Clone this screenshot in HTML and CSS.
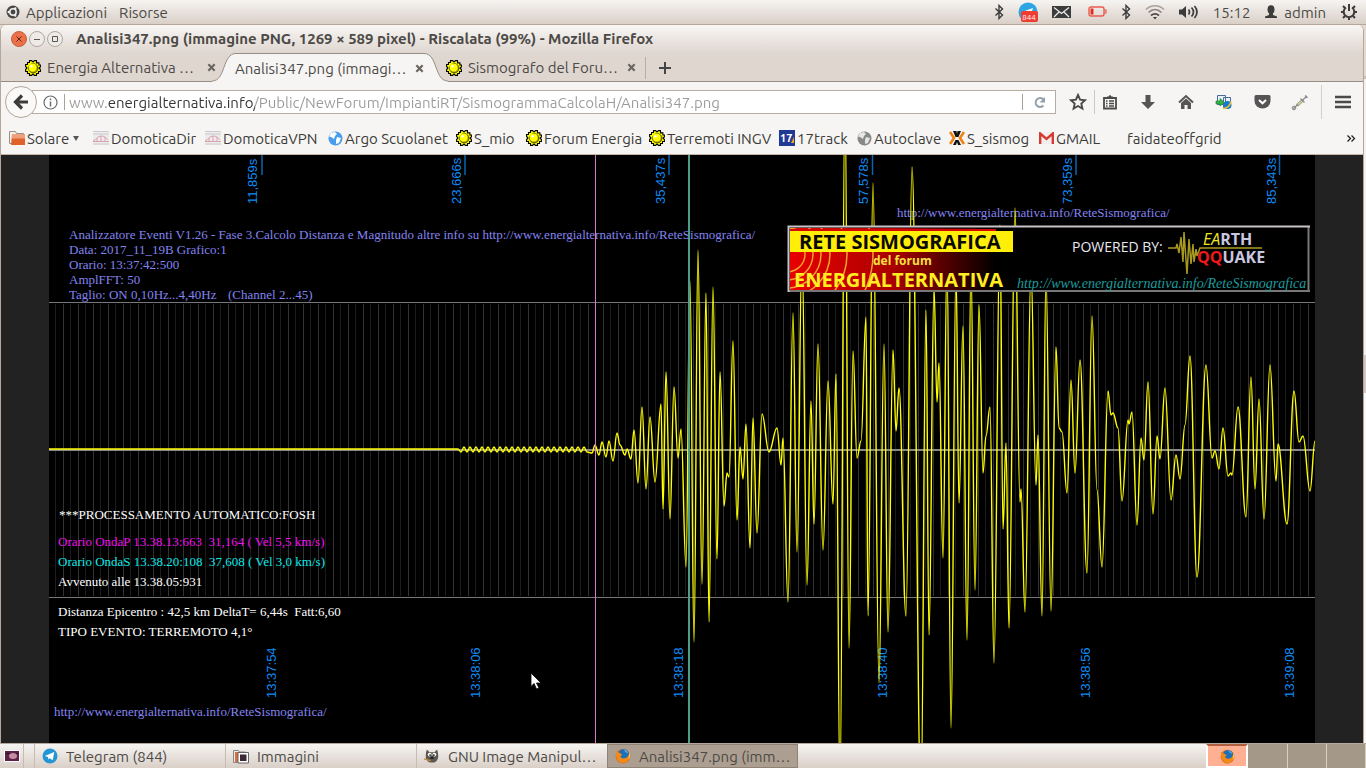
FILE: index.html
```html
<!DOCTYPE html>
<html lang="it">
<head>
    <meta charset="UTF-8">
    <meta name="viewport" content="width=device-width, initial-scale=1.0">
    <title>Analisi347.png</title>
    <link rel="stylesheet" href="styles.css">
</head>
<body>
    <!-- shared icons -->
    <svg class="defs" width="0" height="0" aria-hidden="true">
        <symbol id="sun" viewBox="0 0 16 16">
            <path d="M4.500 .6h2L8 2l1.500-1.400h2v2.300h2.400V5h1.500v2L14 8l1.400 1.500v2h-1.900v2h-2v1.900h-2L8 14l-1.500 1.400h-2v-1.900h-2v-2H.6v-2L2 8 .6 6.500v-2h1.900v-2h2z" fill="#ff0" stroke="#000" stroke-width="1.100"/>
            <circle cx="8.200" cy="8.200" r="4.700" fill="#b8a800" stroke="#000" stroke-width=".6"/>
            <circle cx="7.600" cy="7.500" r="3.900" fill="#ff0"/>
            <circle cx="6.500" cy="6.300" r="1.200" fill="#fff"/>
        </symbol>
        <symbol id="bluetooth" viewBox="0 0 10 16">
            <path d="M1.500 4.500l7 6.500L5 14.500V1.500L8.500 5l-7 6.500" fill="none" stroke="#3c3c3c" stroke-width="1.400"/>
        </symbol>
        <symbol id="firefox" viewBox="0 0 16 16">
            <circle cx="8" cy="8.200" r="7.300" fill="#e66000"/>
            <circle cx="8.500" cy="6.600" r="5.500" fill="#1c6fb8"/>
            <path d="M8 1.500c3 0 5 2 5 4-1-1-3-1-3-2.500z" fill="#5bb4e8"/>
            <path d="M1.500 3c1 1.500 2 1 3.500 2 0 1 2 1 2.500 1.500-.5 1-2 1-2 2 1 2 3 2 4.500 1.500 2 0 3-1 3.500-3.500 1.500 3 .5 6-2 7.500-3 1.800-8 1-9.500-3C.5 8.500.8 5 1.500 3z" fill="#f08a1c"/>
            <path d="M14 4c1.500 3 1.300 6-.5 8 .5-3 .5-5 .5-8z" fill="#ffd24a"/>
        </symbol>
        <symbol id="chart" viewBox="0 0 16 16">
            <rect y="1" width="16" height="14" fill="#ececee"/>
            <path d="M0 1.500h16M0 4h16M0 14h16" stroke="#c4c4c8" stroke-width=".8"/>
            <path d="M0 11c3-1 4-5 8-5 3 0 5 1 7 4M0 11.500h16M4 8v3M8 6v5M12 7v4" fill="none" stroke="#dc98a4" stroke-width=".9"/>
        </symbol>
        <symbol id="close" viewBox="0 0 10 10">
            <path d="M1.500 1.500l7 7M8.500 1.500l-7 7" stroke="#6a6560" stroke-width="2.400"/>
        </symbol>
    </svg>

    <header class="panel">
        <svg class="logo" width="14" height="14" viewBox="0 0 14 14"><circle cx="7" cy="7" r="6.500" fill="#4a4844"/><circle cx="7" cy="7" r="3.200" fill="none" stroke="#eee" stroke-width="1.500"/><circle cx="2.800" cy="7" r="1.200" fill="#eee"/><circle cx="9.200" cy="3.400" r="1.200" fill="#eee"/><circle cx="9.200" cy="10.600" r="1.200" fill="#eee"/></svg>
        <button class="menu">Applicazioni</button>
        <button class="menu">Risorse</button>
        <div class="tray">
            <svg width="10" height="16"><use href="#bluetooth"/></svg>
            <svg width="20" height="20" viewBox="0 0 20 20"><circle cx="10" cy="10" r="9.500" fill="#2ca5e0"/><path d="M4 10l11-4-2 6z" fill="#fff"/><rect x="3" y="9" width="17" height="11" rx="2" fill="#f03c32"/><text x="11" y="18" class="badge">844</text></svg>
            <svg width="19" height="14" viewBox="0 0 19 14"><path d="M0 1h19v12H0z" fill="#3c3c3c"/><path d="M2 2.500l7.500 6 7.500-6M2 12l5-5M17 12l-5-5" fill="none" stroke="#eee" stroke-width="1.200"/></svg>
            <svg class="battery" width="19" height="12" viewBox="0 0 19 12"><rect x="1" y="1" width="15" height="9" rx="2" fill="none" stroke="#ec5a50" stroke-width="1.400"/><path d="M16 4h2v3h-2" fill="none" stroke="#ec5a50" stroke-width="1.200"/><path d="M2.500 2.500h3v6h-3z" fill="#e03024"/></svg>
            <svg width="10" height="16"><use href="#bluetooth"/></svg>
            <svg width="20" height="16" viewBox="0 0 20 16" fill="none" stroke-width="1.700"><path d="M1 5.500c5-5 13-5 18 0" stroke="#aaa39c"/><path d="M3.500 8.500c4-4 9-4 13 0" stroke="#8b857f"/><path d="M6 11.500c3-2.500 5-2.500 8 0" stroke="#4a4844"/><path d="M8 13h4l-2 2.500z" fill="#3c3c3c"/></svg>
            <svg width="20" height="16" viewBox="0 0 20 16"><path d="M0 5.500h3L7 2v12l-4-3.500H0z" fill="#3c3c3c"/><path d="M9.500 5.500q2 2.500 0 5M12.500 3.500q4 4.500 0 9M15.500 2q5 6 0 12" fill="none" stroke="#3c3c3c" stroke-width="1.700"/></svg>
            <span>15:12</span>
            <button class="menu user"><svg width="14" height="14" viewBox="0 0 14 14"><ellipse cx="7" cy="4.500" rx="3.500" ry="4.300" fill="#3c3c3c"/><path d="M5 7h4v3l4 1.500V13H1v-1.500L5 10z" fill="#3c3c3c"/></svg>admin</button>
            <svg width="18" height="18" viewBox="0 0 18 18" fill="none" stroke="#3c3c3c"><path d="M6 4.500a5.300 5.300 0 1 0 6 0" stroke-width="2"/><path d="M9 1v7" stroke-width="2"/><path d="M3 3l2 2M15 3l-2 2M1 9h3M17 9h-3M3 15l2-2M15 15l-2-2M9 14v3" stroke-width="2"/></svg>
        </div>
    </header>

    <main class="window">
        <div class="titlebar">
            <button class="wbtn wclose" aria-label="Chiudi"><svg width="8" height="8"><path d="M1.500 1.500l5 5M6.500 1.500l-5 5" stroke="#5c2a18"/></svg></button>
            <button class="wbtn" aria-label="Minimizza"><svg width="8" height="8"><path d="M1 4.500h6" stroke="#555"/></svg></button>
            <button class="wbtn" aria-label="Massimizza"><svg width="8" height="8"><path d="M1.500 1.500h5v5h-5z" fill="none" stroke="#555"/></svg></button>
            <h1>Analisi347.png (immagine PNG, 1269 × 589 pixel) - Riscalata (99%) - Mozilla Firefox</h1>
        </div>

        <div class="tabs">
            <div class="tab">
                <svg width="16" height="16"><use href="#sun"/></svg>
                <span class="label">Energia Alternativa …</span>
                <button class="tclose" aria-label="Chiudi scheda"><svg width="9" height="9"><use href="#close"/></svg></button>
            </div>
            <div class="tab active">
                <svg class="curve" width="24" height="29" viewBox="0 0 24 29"><path d="M0 29V28C14 28 10 .5 24 .5V29z" fill="#f6f5f3"/><path d="M0 28C14 28 10 .5 24 .5" fill="none" stroke="#958c84"/></svg>
                <div class="inner">
                    <span class="label">Analisi347.png (immagi…</span>
                    <button class="tclose" aria-label="Chiudi scheda"><svg width="9" height="9"><use href="#close"/></svg></button>
                </div>
                <svg class="curve" width="24" height="29" viewBox="0 0 24 29"><path d="M24 29V28C10 28 14 .5 0 .5V29z" fill="#f6f5f3"/><path d="M24 28C10 28 14 .5 0 .5" fill="none" stroke="#958c84"/></svg>
            </div>
            <div class="tab last">
                <svg width="16" height="16"><use href="#sun"/></svg>
                <span class="label">Sismografo del Foru…</span>
                <button class="tclose" aria-label="Chiudi scheda"><svg width="9" height="9"><use href="#close"/></svg></button>
            </div>
            <button class="newtab" aria-label="Nuova scheda"><svg width="12" height="12"><path d="M6 0v12M0 6h12" stroke="#444" stroke-width="2"/></svg></button>
        </div>

        <nav class="navbar">
            <button class="back" aria-label="Indietro"><svg width="16" height="16" viewBox="0 0 16 16"><path d="M9 1.500L2.500 8 9 14.500M3 8h12" fill="none" stroke="#3c3c3c" stroke-width="3.200"/></svg></button>
            <div class="urlbar">
                <svg width="15" height="15" viewBox="0 0 15 15"><circle cx="7.500" cy="7.500" r="6.500" fill="none" stroke="#6c6c6c" stroke-width="1.200"/><path d="M7.500 3.500v1.800M7.500 6.500v5" stroke="#6c6c6c" stroke-width="1.500"/></svg>
                <i class="line"></i>
                <input class="url" type="text" aria-label="Indirizzo" value="www.energialternativa.info/Public/NewForum/ImpiantiRT/SismogrammaCalcolaH/Analisi347.png">
                <i class="line"></i>
                <button class="reload" aria-label="Ricarica"><svg width="13" height="13" viewBox="0 0 13 13"><path d="M10.500 9.500a4.500 4.500 0 1 1 0-6" fill="none" stroke="#93a0ac" stroke-width="1.900"/><path d="M12 1v5.500H6.500z" fill="#93a0ac"/></svg></button>
            </div>
            <div class="tools">
                <button aria-label="Preferiti"><svg width="18" height="18" viewBox="0 0 18 18"><path d="M9 2l2.100 4.700 5 .5-3.800 3.400 1.100 5L9 13l-4.400 2.600 1.100-5L1.900 7.200l5-.5z" fill="none" stroke="#4a4a4a" stroke-width="1.900"/></svg></button>
                <button aria-label="Segnalibri"><svg width="16" height="16" viewBox="0 0 16 16"><path d="M2 4h12v10.500H2z" fill="none" stroke="#4a4a4a" stroke-width="1.800"/><path d="M5 2.500h1.500L8 .8l1.500 1.700H11V5H5z" fill="#4a4a4a"/><path d="M4 7h1.500M7 7h5M4 9.500h1.500M7 9.500h5M4 12h1.500M7 12h5" stroke="#4a4a4a" stroke-width="1.300"/></svg></button>
                <button aria-label="Download"><svg width="16" height="16" viewBox="0 0 16 16"><path d="M5.500 1h5v7H15l-7 7-7-7h4.500z" fill="#555"/></svg></button>
                <button aria-label="Pagina iniziale"><svg width="16" height="16" viewBox="0 0 16 16"><path d="M1 8.500l7-6.500 7 6.500" fill="none" stroke="#555" stroke-width="2"/><path d="M3 9l5-4.500L13 9v6H9.500v-4h-3v4H3z" fill="#555"/></svg></button>
                <button aria-label="Traduci"><svg width="18" height="16" viewBox="0 0 18 16"><path d="M2.500 1.500h8v9h-8zM8.500 3.500h7v10h-7z" fill="#e8f0fb" stroke="#4a6c98"/><circle cx="12.500" cy="11" r="4" fill="#1678d0"/><path d="M8 14.500c4 0 7-3 8-7" fill="none" stroke="#f0c020" stroke-width="1.500"/><path d="M1 7h4V4.500L9.500 8.500 5 12V10H1z" fill="#2fb344" stroke="#187a2a" stroke-width=".6"/></svg></button>
                <button aria-label="Pocket"><svg width="17" height="16" viewBox="0 0 17 16"><path d="M2 1h13q1.500 0 1.500 1.500V7a8 7.500 0 0 1-16 0V2.500Q.5 1 2 1z" fill="#555"/><path d="M5 6l3.500 3.300L12 6" fill="none" stroke="#fff" stroke-width="2"/></svg></button>
                <button aria-label="Strumento"><svg width="18" height="17" viewBox="0 0 18 17"><path d="M2 15L16 2" stroke="#888" stroke-width="1.200"/><path d="M6 11.500L12 6" stroke="#8f8f88" stroke-width="3"/><path d="M7 10.500L11 7" stroke="#dcd98c" stroke-width="1.600"/><path d="M9.500 4.500l4 4M14 1.500l2.500 2.500" stroke="#8a8a8a" stroke-width="1.100"/><circle cx="3" cy="14" r="1.800" fill="none" stroke="#888"/></svg></button>
            </div>
            <button class="hamburger" aria-label="Menu"><svg width="16" height="14"><path d="M0 2h16M0 7h16M0 12h16" stroke="#4a4a4a" stroke-width="2.600"/></svg></button>
        </nav>

        <div class="bookmarks">
            <a href="#"><svg width="16" height="16" viewBox="0 0 16 16"><path d="M.5 1.500h6l1 2h7v10H.5z" fill="#f4f0ec" stroke="#9a8f86"/><path d="M3 4.500h13V15H2z" fill="#e0622a"/><path d="M3 4.500h13v4H3z" fill="#f0a07c"/></svg>Solare<svg class="arrow" width="6" height="5"><path d="M0 0h6L3 5z" fill="#555"/></svg></a>
            <a href="#"><svg width="16" height="16"><use href="#chart"/></svg>DomoticaDir</a>
            <a href="#"><svg width="16" height="16"><use href="#chart"/></svg>DomoticaVPN</a>
            <a href="#"><svg width="15" height="15" viewBox="0 0 15 15"><circle cx="7.500" cy="7.500" r="7" fill="#4a9cec"/><path d="M3 2l4-1 2 2-2 2-1 3-3-2-2-.5zM9 6l4 1-2 5-3 1V9z" fill="#fff"/></svg>Argo Scuolanet</a>
            <a href="#"><svg width="16" height="16"><use href="#sun"/></svg>S_mio</a>
            <a href="#"><svg width="16" height="16"><use href="#sun"/></svg>Forum Energia</a>
            <a href="#"><svg width="16" height="16"><use href="#sun"/></svg>Terremoti INGV</a>
            <a href="#"><svg width="16" height="16"><path d="M0 0h16v16H0z" fill="#1f3a93"/><text x="1" y="12" class="seventeen">17</text><path d="M12 13l3-6v6z" fill="#f5a623"/></svg>17track</a>
            <a href="#"><svg width="15" height="15" viewBox="0 0 15 15"><circle cx="7.500" cy="7.500" r="7" fill="#888"/><path d="M3 2l4-1 2 2-2 2-1 3-3-2-2-.5zM9 6l4 1-2 5-3 1V9z" fill="#e6e6e6"/></svg>Autoclave</a>
            <a href="#"><svg width="16" height="16" viewBox="0 0 16 16"><path d="M1 2l4 6-4 6M15 2l-4 6 4 6" fill="none" stroke="#f08010" stroke-width="2.600"/><path d="M4 1h3.500L8 4l.5-3H12L9.500 7h-3zM4 15l2.500-5h3l2.500 5H9l-1-3-1 3z" fill="#111"/></svg>S_sismog</a>
            <a href="#"><svg width="15" height="12" viewBox="0 0 15 12"><path d="M0 0h15v12H0z" fill="#f0eeee"/><path d="M1.200 12V1.500l6.300 5.500 6.300-5.500V12" fill="none" stroke="#d93a30" stroke-width="2.400"/></svg>GMAIL</a>
            <a href="#">faidateoffgrid</a>
            <button class="more" aria-label="Altri segnalibri"><svg width="9" height="7"><path d="M.5 .5l3 3-3 3M4.500 .5l3 3-3 3" fill="none" stroke="#222" stroke-width="1.300"/></svg></button>
        </div>

        <section class="viewer">
            <svg class="plot" viewBox="49 155 1266 588" preserveAspectRatio="xMidYMin slice">
                <defs>
                    <linearGradient id="red" x1="0" x2="1"><stop offset="0" stop-color="#e80000"/><stop offset=".5" stop-color="#a00"/><stop offset="1" stop-color="#000"/></linearGradient>
                    <clipPath id="bannerClip"><rect x="790" y="228" width="250" height="62"/></clipPath>
                </defs>
                <rect x="49" y="155" width="1266" height="588" fill="#000"/>
                <g id="grid" shape-rendering="crispEdges"></g>
                <path d="M49 302.500h1266M49 597.500h1266" stroke="#777"/>
                <path d="M49 450h1266" stroke="#888" stroke-width="2"/>
                <path d="M262 155v20M465 155v20M669 155v20M872.500 155v20M1076 155v20M1279.500 155v20" stroke="#0a64b4" stroke-width="1.500"/>

                <g class="axis">
                    <text transform="translate(257 204) rotate(-90)">11,859s</text>
                    <text transform="translate(461 204) rotate(-90)">23,666s</text>
                    <text transform="translate(665 204) rotate(-90)">35,437s</text>
                    <text transform="translate(868 204) rotate(-90)">57,578s</text>
                    <text transform="translate(1072 204) rotate(-90)">73,359s</text>
                    <text transform="translate(1276 204) rotate(-90)">85,343s</text>
                    <text transform="translate(276 698) rotate(-90)">13:37:54</text>
                    <text transform="translate(480 698) rotate(-90)">13:38:06</text>
                    <text transform="translate(683 698) rotate(-90)">13:38:18</text>
                    <text transform="translate(887 698) rotate(-90)">13:38:40</text>
                    <text transform="translate(1090 698) rotate(-90)">13:38:56</text>
                    <text transform="translate(1294 698) rotate(-90)">13:39:08</text>
                </g>

                <g class="note violet">
                    <text x="69" y="239">Analizzatore Eventi V1.26 - Fase 3.Calcolo Distanza e Magnitudo altre info su http://www.energialternativa.info/ReteSismografica/</text>
                    <text x="69" y="254">Data: 2017_11_19B Grafico:1</text>
                    <text x="69" y="269">Orario: 13:37:42:500</text>
                    <text x="69" y="284">AmplFFT: 50</text>
                    <text x="69" y="299">Taglio: ON 0,10Hz...4,40Hz</text>
                    <text x="228" y="299">(Channel 2...45)</text>
                    <text x="897" y="217">http://www.energialternativa.info/ReteSismografica/</text>
                    <text x="54" y="716">http://www.energialternativa.info/ReteSismografica/</text>
                </g>
                <g class="note">
                    <text x="59" y="519">***PROCESSAMENTO AUTOMATICO:FOSH</text>
                    <text x="58" y="546" class="magenta">Orario OndaP 13.38.13:663&#160; 31,164 ( Vel 5,5 km/s)</text>
                    <text x="58" y="566" class="cyan">Orario OndaS 13.38.20:108&#160; 37,608 ( Vel 3,0 km/s)</text>
                    <text x="58" y="586">Avvenuto alle 13.38.05:931</text>
                    <text x="58" y="616">Distanza Epicentro : 42,5 km DeltaT= 6,44s&#160; Fatt:6,60</text>
                    <text x="58" y="636">TIPO EVENTO: TERREMOTO 4,1°</text>
                </g>

                <path id="wave" fill="none" stroke="#ff0" stroke-width="1.400"/>
                <path d="M595.500 155v588" stroke="#d878c8" shape-rendering="crispEdges"/>
                <path d="M689 155v588" stroke="#4c9c88" stroke-width="2"/>

                <!-- banner -->
                <path d="M788 226h522v66H788z" fill="#000"/>
                <path d="M1308.500 226v65M788 291h522" fill="none" stroke="#777" stroke-width="2"/>
                <path d="M788.500 292V226.500H1310" fill="none" stroke="#c8c4c8" stroke-width="2"/>
                <g clip-path="url(#bannerClip)">
                    <rect x="790" y="228" width="206" height="62" fill="url(#red)"/>
                    <g fill="none" stroke="#f4a030" stroke-width="1.500">
                        <circle cx="787" cy="254" r="18"/><circle cx="787" cy="254" r="26"/><circle cx="787" cy="254" r="34"/><circle cx="787" cy="254" r="43"/><circle cx="787" cy="254" r="60"/><circle cx="787" cy="254" r="86"/>
                    </g>
                    <rect x="790" y="231" width="223" height="21" fill="#ffee08"/>
                    <rect x="790" y="229" width="206" height="2" fill="#d40808"/>
                </g>
                <path d="M1168 248h8l1-4 2 9 2-16 2 25 1-30 3 42 2-35 2 25 2-20 1 18 2-13 1 7 3-8h62" fill="none" stroke="#a89a20" stroke-width="1.500"/>
                <g class="banner">
                    <text x="799" y="249" class="big">RETE SISMOGRAFICA</text>
                    <text x="873" y="265" class="small">del forum</text>
                    <text x="794" y="287" class="big gold">ENERGIALTERNATIVA</text>
                    <text x="1072" y="252" class="powered">POWERED BY:</text>
                    <text x="1203" y="245" class="quake"><tspan class="ea">EA</tspan>RTH</text>
                    <text x="1197" y="263" class="quake"><tspan class="qq">QQ</tspan>UAKE</text>
                    <text x="1017" y="288" class="link">http://www.energialternativa.info/ReteSismografica</text>
                </g>
            </svg>
            <svg class="cursor" width="12" height="18" viewBox="0 0 12 18"><path d="M1 1v13.500l3-3 2.500 5.500 2.500-1-2.500-5H11z" fill="#fff" stroke="#000" stroke-width=".8"/></svg>
        </section>
    </main>

    <footer class="taskbar">
        <button class="desktop" aria-label="Mostra scrivania"><svg width="16" height="12"><path d="M.5 .5h15v11H.5z" fill="#5c2346" stroke="#fff"/><path d="M2 3h12v1H2z" fill="#2a1020"/><ellipse cx="9" cy="6" rx="4" ry="3" fill="#c88ca0"/></svg></button>
        <button class="task"><svg width="16" height="16" viewBox="0 0 16 16"><circle cx="8" cy="8" r="7.500" fill="#2496d2"/><path d="M2.800 8l9.500-4-1.600 8.200-3-2-1.300 1.400-.4-2.600z" fill="#fff"/></svg>Telegram (844)</button>
        <button class="task"><svg width="16" height="16" viewBox="0 0 16 16"><path d="M.5 2.500h5l1 1.500h6v10.500H.5z" fill="#eee" stroke="#888"/><path d="M2 4h3v10H2z" fill="#d9703c"/><path d="M5 4.500h10.500V15H5z" fill="#fff" stroke="#666"/><path d="M7 6.500h6.500V13H7z" fill="#3a2836"/></svg>Immagini</button>
        <button class="task"><svg width="16" height="16" viewBox="0 0 17 16"><path d="M2 5l1-4 3 3h5l3-3 1 5q1 7-4 9H6Q1 13 2 5z" fill="#5c5850"/><circle cx="6" cy="6.500" r="2" fill="#fff"/><circle cx="11" cy="6.500" r="2" fill="#fff"/><circle cx="6.500" cy="7" r=".9"/><circle cx="10.500" cy="7" r=".9"/><ellipse cx="8.500" cy="10" rx="2" ry="1.200" fill="#222"/><path d="M0 11l7 2" stroke="#c08840" stroke-width="1.500"/></svg>GNU Image Manipul…</button>
        <button class="task current"><svg width="16" height="16"><use href="#firefox"/></svg>Analisi347.png (imm…</button>
        <div class="spaces">
            <button class="space on" aria-label="Area 1"><svg width="15" height="15"><use href="#firefox"/></svg></button>
            <button class="space" aria-label="Area 2"></button>
            <button class="space" aria-label="Area 3"></button>
            <button class="space" aria-label="Area 4"></button>
        </div>
    </footer>
    <script src="script.js"></script>
</body>
</html>
```
FILE: styles.css
```css
* {
    box-sizing: border-box;
}
body {
    margin: 0;
    height: 100vh;
    display: flex;
    flex-direction: column;
    overflow: hidden;
    font-family: Ubuntu, "Noto Sans", sans-serif;
    font-size: 15px;
    color: #4c4a46;
    background: linear-gradient(#e4dad2 0 76px, #cbbfb6 76px 79px, #f4f1ee 79px 355px, #d3c7c1 355px 393px, #f8f8f8 393px);
}
button {
    display: flex;
    align-items: center;
    justify-content: center;
    padding: 0;
    border: none;
    background: none;
    font: inherit;
    color: inherit;
}
svg {
    flex: none;
}
.defs {
    position: absolute;
}

/* top panel */
.panel {
    display: flex;
    align-items: center;
    height: 25px;
    padding: 0 8px 0 6px;
    border-bottom: 1px solid #b5a79b;
    background: linear-gradient(#f6f4f2, #d9cfc7);
}
.logo {
    margin-right: 6px;
}
.menu {
    margin-right: 12px;
}
.tray {
    display: flex;
    align-items: center;
    gap: 14px;
    margin-left: auto;
}
.battery {
    margin-left: 3px;
}
.user {
    gap: 6px;
    margin: 0;
}
.badge {
    font-size: 8px;
    fill: #fff;
    text-anchor: middle;
}

/* window */
.window {
    flex: 1;
    min-height: 0;
    display: flex;
    flex-direction: column;
    margin-right: 2px;
    border: solid #b5a79b;
    border-width: 0 1px;
    background: #f6f5f3;
    border-radius: 6px 6px 0 0;
    overflow: hidden;
}
.titlebar {
    display: flex;
    align-items: center;
    height: 28px;
    padding: 0 10px;
    gap: 2px;
    background: linear-gradient(#f8f6f4, #dfd6d0);
}
.wbtn {
    width: 16px;
    height: 16px;
    border: 1px solid #b0a69e;
    border-radius: 50%;
    background: #eeeae6;
}
.wclose {
    background: #ec7048;
    border-color: #c06040;
}
h1 {
    margin: 0 0 0 11px;
    font-size: 15px;
    line-height: 20px;
    white-space: nowrap;
}
.tabs {
    display: flex;
    height: 29px;
    padding-left: 24px;
    background: linear-gradient(#958c84, #958c84) bottom / 100% 1px no-repeat #dfd6d0;
}
.tab {
    display: flex;
    align-items: center;
    width: 191px;
    gap: 6px;
}
.label {
    flex: 1;
    white-space: nowrap;
}
.active {
    width: 236px;
    gap: 0;
    margin: 0 -4px;
}
.inner {
    flex: 1;
    height: 29px;
    display: flex;
    align-items: center;
    border-top: 1px solid #958c84;
    background: #f6f5f3;
}
.inner .label {
    margin-left: -1px;
}
.curve {
    display: block;
}
.last {
    width: 202px;
    padding: 0 10px 0 2px;
    background: linear-gradient(#b8aea6, #b8aea6) right / 1px 22px no-repeat;
}
.newtab {
    width: 38px;
}

/* navigation */
.navbar {
    display: flex;
    align-items: center;
    height: 40px;
    padding: 0 12px 0 4px;
}
.back {
    width: 32px;
    height: 32px;
    border: 1px solid #b3a699;
    border-radius: 50%;
    background: #faf9f8;
    z-index: 1;
}
.urlbar {
    flex: 1;
    display: flex;
    align-items: center;
    height: 24px;
    margin-left: -5px;
    padding-left: 10px;
    border: 1px solid #b8aca0;
    background: #fff;
}
.line {
    width: 1px;
    height: 16px;
    background: #aaa096;
}
.urlbar .line:first-of-type {
    margin-left: 6px;
}
.url {
    flex: 1;
    min-width: 0;
    height: 22px;
    padding: 0 0 0 4px;
    border: none;
    outline: none;
    font: inherit;
    /* grey path, dark host name */
    color: transparent;
    background: linear-gradient(to right, #9c9a98 42px, #333 42px 190px, #9c9a98 190px);
    -webkit-background-clip: text;
    background-clip: text;
}
.reload {
    width: 32px;
}
.tools {
    display: flex;
    margin-left: 5px;
}
.tools button {
    width: 38px;
    height: 24px;
}
.tools button:first-child {
    width: 34px;
    border-right: 1px solid #d0c8c0;
}
.tools button:nth-child(2) {
    width: 34px;
    padding-right: 4px;
}
.hamburger {
    height: 34px;
    margin-left: 2px;
    padding-left: 13px;
    border-left: 1px solid #d6cec8;
}
.bookmarks {
    display: grid;
    grid-template-columns: 84px 112px 123px 128px 70px 123px 130px 78px 92px 90px 88px 1fr 16px;
    align-items: center;
    height: 33px;
    padding: 0 4px 0 8px;
    border-bottom: 1px solid #c4b5a8;
}
.bookmarks a {
    display: flex;
    align-items: center;
    gap: 2px;
    color: #3c3b38;
    text-decoration: none;
    white-space: nowrap;
}
.arrow {
    margin-left: 2px;
}
.seventeen {
    font-size: 11px;
    font-weight: bold;
    fill: #fff;
}

/* image page */
.viewer {
    position: relative;
    flex: 1;
    min-height: 0;
    padding: 0 48px;
    background: #222;
}
.plot {
    display: block;
    width: 100%;
    height: 100%;
}
.cursor {
    position: absolute;
    left: 529px;
    top: 517px;
}
.axis {
    font-family: "Liberation Sans", sans-serif;
    font-size: 13px;
    fill: #0f8cf5;
}
.note {
    font-family: "Liberation Serif", serif;
    font-size: 13px;
    fill: #fff;
}
.violet {
    fill: #8484f0;
}
.magenta {
    fill: #f010f0;
}
.cyan {
    fill: #10e8e8;
}
.banner {
    font-family: "Open Sans", sans-serif;
    fill: #e8e8f0;
}
.big {
    font-size: 20px;
    font-weight: bold;
    fill: #0a0a00;
}
.gold {
    fill: #ffee20;
}
.small {
    font-size: 12px;
    font-weight: bold;
    fill: #f4e040;
}
.powered {
    font-size: 14px;
}
.quake {
    font-size: 16px;
    font-weight: bold;
    fill: #c8c8e0;
}
.ea {
    font-weight: normal;
    font-style: italic;
    fill: #f0e820;
}
.qq {
    fill: #f01818;
}
.link {
    font-family: "Liberation Serif", serif;
    font-size: 14px;
    font-style: italic;
    fill: #1c9c9c;
}

/* bottom bar */
.taskbar {
    display: flex;
    height: 25px;
    border-top: 1px solid #b5a79b;
    background: linear-gradient(#f6f4f2, #d9cfc7);
}
.desktop {
    width: 24px;
    margin-right: 10px;
    border-right: 1px solid #c8bcb2;
}
.task {
    width: 191px;
    padding-left: 7px;
    gap: 8px;
    justify-content: flex-start;
    border-left: 1px solid #c8bcb2;
    white-space: nowrap;
}
.current {
    background: #ac9f91;
    border: 1px solid #8f8375;
}
.spaces {
    display: flex;
    width: 160px;
    margin-left: auto;
}
.space {
    flex: 1;
    border-right: 1px solid #d8cfc6;
    background: #a49888;
}
.on {
    background: #ffb092;
    border: 2px solid #fff;
    border-top-color: #b06040;
}
```
FILE: script.js
```js
const NS = 'http://www.w3.org/2000/svg';
const grid = document.getElementById('grid');

function addLine(x, color) {
    const line = document.createElementNS(NS, 'path');
    line.setAttribute('d', `M${x} 304V596`);
    line.setAttribute('stroke', color);
    grid.appendChild(line);
}

for (let x = 49; x < 1315; x += 15) {
    addLine(x - 0.5, '#333');
    addLine(x + 6.5, '#1c1c1c');
}

// turning points of the trace: x, y
const turns = [
    595,445, 599,455, 602,442, 606,457, 609,441, 613,461, 617,433, 620,445, 625,455, 627,449, 631,459,
    634,430, 638,483, 642,407, 646,489, 650,417, 655,482, 661,404, 663,509, 666,372, 670,519, 674,387,
    678,458, 681,429, 686,567, 690,281, 694,642, 698,250, 702,584, 706,293, 709,622, 713,287, 717,559,
    720,372, 724,506, 727,473, 729,477, 733,341, 737,520, 740,447, 743,479, 746,424, 750,548, 753,418,
    757,533, 762,414, 769,452, 777,428, 781,465, 783,438, 788,602, 793,313, 797,552, 802,250, 807,585,
    811,401, 814,524, 818,344, 823,550, 828,381, 833,504, 836,374, 840,790, 845,90, 849,648, 853,351,
    857,458, 861,441, 866,317, 868,616, 873,183, 879,683, 884,344, 888,632, 893,350, 896,431, 899,388,
    906,616, 912,167, 921,800, 926,310, 929,635, 934,288, 937,402, 939,363, 943,558, 947,260, 951,728,
    956,270, 959,503, 963,326, 967,640, 971,265, 975,590, 979,305, 983,473, 986,436, 990,407, 994,663,
    1000,225, 1003,529, 1006,443, 1009,628, 1015,208, 1020,502, 1021,489, 1025,612, 1031,270, 1036,485,
    1038,435, 1042,616, 1046,275, 1051,611, 1056,347, 1059,428, 1062,432, 1067,493, 1071,380, 1075,473,
    1080,360, 1087,573, 1092,316, 1097,490, 1102,567, 1108,391, 1111,415, 1113,413, 1118,428, 1122,501,
    1128,420, 1129,424, 1132,412, 1137,525, 1141,438, 1144,460, 1148,382, 1153,514, 1157,436, 1160,459,
    1165,388, 1171,500, 1176,455, 1180,479, 1185,425, 1190,356, 1197,577, 1206,365, 1212,458, 1215,451,
    1219,469, 1223,428, 1228,476, 1231,473, 1232,475, 1238,407, 1246,517, 1251,377, 1255,489, 1259,399,
    1264,519, 1270,365, 1276,481, 1278,444, 1287,524, 1294,391, 1299,442, 1303,436, 1310,491, 1315,441
];

let d = 'M49 449H458';
let px = 458;
let py = 449;

function curveTo(x, y) {
    const k = (x - px) * 0.4;
    d += `C${px + k} ${py} ${x - k} ${y} ${x} ${y}`;
    px = x;
    py = y;
}

// small ripple before the first wave arrives
for (let i = 0; i < 43; i++) {
    curveTo(461 + i * 3, i % 2 ? 447 : 452);
}
curveTo(592, 453);
for (let i = 0; i < turns.length; i += 2) {
    curveTo(turns[i], turns[i + 1]);
}
document.getElementById('wave').setAttribute('d', d);
```
